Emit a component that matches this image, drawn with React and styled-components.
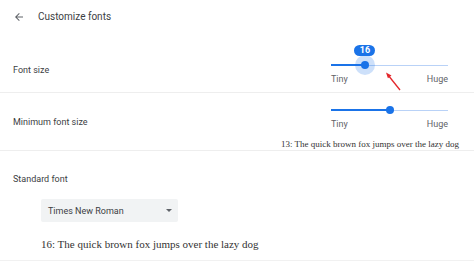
import React from "react";
import styled, { createGlobalStyle } from "styled-components";

const GlobalStyle = createGlobalStyle`
  html, body {
    margin: 0;
    padding: 0;
    background: #ffffff;
  }
  body {
    font-family: Roboto, "Liberation Sans", Arial, sans-serif;
    -webkit-font-smoothing: antialiased;
  }
`;

function Slider({ value, position, bubble, children }) {
  return (
    <SliderBlock>
      <TrackWrap>
        <TrackActive style={{ width: `${position}%` }} />
        <TrackRest style={{ left: `${position}%` }} />
        {bubble && <Halo style={{ left: `${position}%` }} />}
        <Thumb style={{ left: `${position}%` }} />
        {bubble && <Bubble style={{ left: `${position}%` }}>{value}</Bubble>}
      </TrackWrap>
      <TrackLabels>
        <span>Tiny</span>
        <span>Huge</span>
      </TrackLabels>
      {children}
    </SliderBlock>
  );
}

function App() {
  return (
    <>
      <GlobalStyle />
      <Page>
        <Header>
          <BackButton>
            <svg width="12" height="12" viewBox="0 0 24 24">
              <path
                fill="#5f6368"
                d="M20 11H7.83l5.59-5.59L12 4l-8 8 8 8 1.41-1.41L7.83 13H20v-2z"
              />
            </svg>
          </BackButton>
          <Title>Customize fonts</Title>
        </Header>

        <Section>
          <SettingRow $top={23} $bottom={7}>
            <Label $offset={5}>Font size</Label>
            <Slider value={16} position={29} bubble>
              <Pointer width="20" height="22" viewBox="0 0 20 22">
                <line
                  x1="16"
                  y1="19"
                  x2="4"
                  y2="4"
                  stroke="#e3262b"
                  strokeWidth="1.3"
                />
                <path d="M2 1.5 L7.5 4.4 L3.9 7.3 Z" fill="#e3262b" />
              </Pointer>
            </Slider>
          </SettingRow>
        </Section>

        <Section>
          <SettingRow $top={11} $bottom={0}>
            <Label $offset={12}>Minimum font size</Label>
            <Slider value={13} position={50} />
          </SettingRow>
          <Sample $size={9} $align="right">
            13: The quick brown fox jumps over the lazy dog
          </Sample>
        </Section>

        <FontSection>
          <Label $offset={0}>Standard font</Label>
          <Select>
            <span>Times New Roman</span>
            <Caret />
          </Select>
          <Sample $size={11} $align="left">
            16: The quick brown fox jumps over the lazy dog
          </Sample>
        </FontSection>
      </Page>
    </>
  );
}

export default App;

const Page = styled.div`
  width: 474px;
  height: 264px;
  overflow: hidden;
  background: #ffffff;
`;

const Header = styled.div`
  height: 36px;
  display: flex;
  align-items: flex-start;
  padding: 11px 0 0 13px;
  box-sizing: border-box;
`;

const BackButton = styled.div`
  width: 12px;
  height: 12px;
  display: flex;
  align-items: center;
  margin-right: 13px;
`;

const Title = styled.div`
  font-size: 10px;
  line-height: 12px;
  color: #3c4043;
`;

const Section = styled.div`
  border-bottom: 1px solid #eeeeee;
`;

const SettingRow = styled.div`
  display: flex;
  justify-content: space-between;
  align-items: flex-start;
  padding: ${(p) => p.$top}px 26px ${(p) => p.$bottom}px 13px;
`;

const Label = styled.div`
  margin-top: ${(p) => p.$offset}px;
  font-size: 9px;
  line-height: 12px;
  color: #3c4043;
`;

const SliderBlock = styled.div`
  position: relative;
  width: 117px;
`;

const TrackWrap = styled.div`
  position: relative;
  height: 12px;
`;

const TrackActive = styled.div`
  position: absolute;
  left: 0;
  top: 5px;
  height: 2px;
  background: #1a73e8;
`;

const TrackRest = styled.div`
  position: absolute;
  right: 0;
  top: 5.5px;
  height: 1px;
  background: #b9d2f7;
`;

const Thumb = styled.div`
  position: absolute;
  top: 6px;
  width: 8px;
  height: 8px;
  margin: -4px 0 0 -4px;
  border-radius: 50%;
  background: #1a73e8;
`;

const Halo = styled.div`
  position: absolute;
  top: 6px;
  width: 20px;
  height: 20px;
  margin: -10px 0 0 -10px;
  border-radius: 50%;
  background: rgba(26, 115, 232, 0.22);
`;

const Bubble = styled.div`
  position: absolute;
  top: -14px;
  width: 21px;
  height: 11px;
  margin-left: -10.5px;
  border-radius: 5.5px;
  background: #1a73e8;
  color: #ffffff;
  font-size: 9px;
  font-weight: 700;
  line-height: 11px;
  text-align: center;
`;

const TrackLabels = styled.div`
  display: flex;
  justify-content: space-between;
  margin-top: 2px;
  font-size: 9px;
  line-height: 12px;
  color: #5f6368;
`;

const Pointer = styled.svg`
  position: absolute;
  left: 53px;
  top: 12px;
`;

const Sample = styled.div`
  font-family: "Liberation Serif", "Times New Roman", serif;
  font-size: ${(p) => p.$size}px;
  line-height: ${(p) => p.$size + 3}px;
  color: #333333;
  text-align: ${(p) => p.$align};
  padding: 8px 15px 0 0;
  height: 20px;
  box-sizing: border-box;
`;

const FontSection = styled.div`
  padding: 22px 0 0 13px;
  height: 110px;
  box-sizing: border-box;
  border-bottom: 1px solid #f1f1f1;

  ${Sample} {
    padding: 15px 0 0 28px;
  }
`;

const Select = styled.div`
  display: flex;
  align-items: center;
  justify-content: space-between;
  width: 137px;
  height: 23px;
  box-sizing: border-box;
  margin: 14px 0 0 28px;
  padding: 0 6px 0 7px;
  background: #f1f3f4;
  border-radius: 2px;
  font-size: 9px;
  color: #3c4043;
`;

const Caret = styled.div`
  width: 0;
  height: 0;
  border-left: 3.5px solid transparent;
  border-right: 3.5px solid transparent;
  border-top: 3.5px solid #5f6368;
`;
